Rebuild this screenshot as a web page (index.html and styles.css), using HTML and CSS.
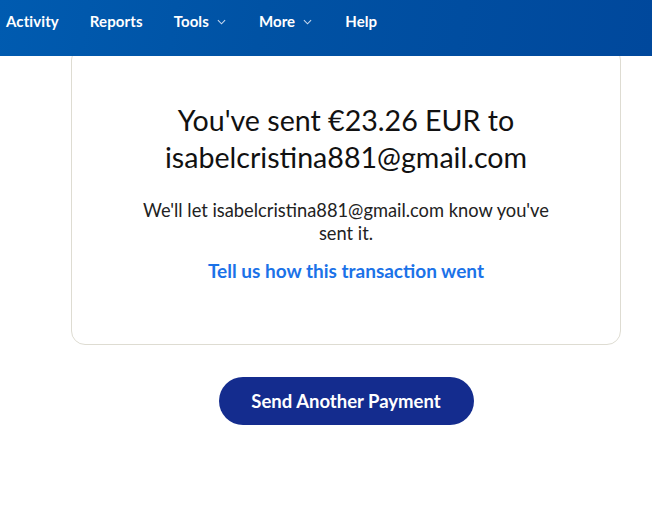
FILE: index.html
```html
<!DOCTYPE html>
<html>
<head>
<meta charset="utf-8">
<link rel="stylesheet" href="styles.css">
</head>
<body>
<header class="topbar">
  <nav class="nav">
    <a class="nav-item">Activity</a>
    <a class="nav-item">Reports</a>
    <a class="nav-item">Tools <svg class="chev" viewBox="0 0 10 6" width="9" height="6"><path d="M1 1l4 4 4-4" fill="none" stroke="#c8d8ee" stroke-width="1.2"/></svg></a>
    <a class="nav-item">More <svg class="chev" viewBox="0 0 10 6" width="9" height="6"><path d="M1 1l4 4 4-4" fill="none" stroke="#c8d8ee" stroke-width="1.2"/></svg></a>
    <a class="nav-item">Help</a>
  </nav>
</header>
<main class="main">
  <section class="card">
    <h1 class="title">You've sent €23.26 EUR to<br>isabelcristina881@gmail.com</h1>
    <p class="info">We'll let isabelcristina881@gmail.com know you've<br>sent it.</p>
    <a class="feedback">Tell us how this transaction went</a>
  </section>
  <div class="actions">
    <button class="btn">Send Another Payment</button>
  </div>
</main>
</body>
</html>
```
FILE: styles.css
```css
* { box-sizing: border-box; }
body {
  margin: 0;
  font-family: "Lato", "Noto Sans", sans-serif;
  background: #fff;
  color: #1e1e1e;
}
.topbar {
  position: relative;
  z-index: 2;
  height: 56px;
  background: linear-gradient(100deg, #005bb0 0%, #0052a4 40%, #00489c 100%);
}
.nav {
  display: flex;
  align-items: center;
  height: 42px;
  padding-left: 6px;
}
.nav-item {
  color: #fff;
  font-size: 15px;
  font-weight: 700;
  letter-spacing: 0.1px;
  display: flex;
  align-items: center;
  gap: 8px;
  margin-right: 31px;
}
.nav-item:nth-child(3), .nav-item:nth-child(4) { margin-right: 33px; }
.chev { margin-top: 1px; }
.main {
  padding-left: 71px;
  width: 621px;
}
.card {
  margin-top: -10px;
  border: 1px solid #dedcd2;
  border-radius: 14px;
  padding: 55px 10px 61px;
  text-align: center;
}
.title {
  margin: 0;
  font-size: 28.6px;
  font-weight: 400;
  line-height: 37px;
  color: #111;
}
.info {
  margin: 23px 0 0;
  font-size: 18.3px;
  line-height: 23px;
  color: #222;
}
.feedback {
  display: inline-block;
  margin-top: 14px;
  font-size: 19px;
  font-weight: 700;
  color: #1b72e8;
  line-height: 24px;
}
.actions {
  display: flex;
  justify-content: center;
  margin-top: 32px;
}
.btn {
  width: 255px;
  height: 48px;
  border: none;
  border-radius: 24px;
  background: #142c8e;
  color: #fff;
  font-family: inherit;
  font-size: 18.5px;
  font-weight: 700;
}
```
